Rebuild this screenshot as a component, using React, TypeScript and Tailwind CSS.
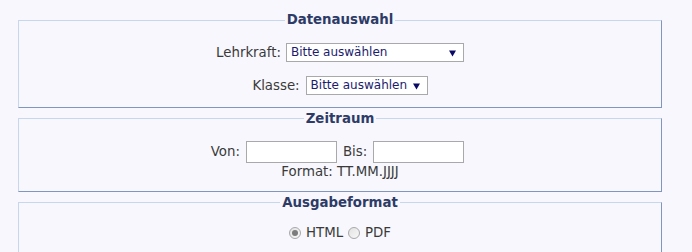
import React from 'react';

const font = "font-['DejaVu_Sans',Verdana,sans-serif]";

const Box: React.FC<{ title: string; className?: string; children: React.ReactNode }> = ({
    title,
    className = '',
    children,
}) => (
    <fieldset
        className={`w-[644px] border border-t-[#c7d7ec] border-l-[#c7d7ec] border-r-[#8196bd] border-b-[#8196bd] ${className}`}
    >
        <legend className="mx-auto px-[2px] text-[13.33px] leading-[16px] font-bold text-[#2d3b66]">
            {title}
        </legend>
        {children}
    </fieldset>
);

const FakeSelect: React.FC<{ width: string }> = ({ width }) => (
    <div
        className={`${width} h-[19px] flex items-center justify-between pl-[4px] pr-[7px] bg-white border border-[#a9a9a9] text-[12px] leading-[17px] text-[#1c1c6e]`}
    >
        <span>Bitte auswählen</span>
        <svg width="7" height="7" viewBox="0 0 7 7" className="mt-[1px]">
            <path d="M0 0.5 H7 L3.5 6.5 Z" fill="#0a0a66" />
        </svg>
    </div>
);

const Radio: React.FC<{ checked?: boolean }> = ({ checked }) => (
    <span className="w-[12px] h-[12px] rounded-full border border-[#a8a8a8] bg-gradient-to-br from-[#e2e2e2] to-[#f8f8f8] flex items-center justify-center">
        {checked && <span className="w-[6px] h-[6px] rounded-full bg-[#7c7c7c]" />}
    </span>
);

export default function App() {
    return (
        <div className={`w-[692px] h-[252px] overflow-hidden bg-[#f7f7fd] pt-[12px] pl-[18px] text-[13.33px] text-[#3a3a3a] ${font}`}>
            <Box title="Datenauswahl">
                <div className="flex flex-col items-center gap-[13px] pt-[15px] pb-[11px]">
                    <div className="flex items-center gap-[5px]">
                        <span>Lehrkraft:</span>
                        <FakeSelect width="w-[178px]" />
                    </div>
                    <div className="flex items-center gap-[6px]">
                        <span>Klasse:</span>
                        <FakeSelect width="w-[122px]" />
                    </div>
                </div>
            </Box>

            <Box title="Zeitraum" className="mt-[3px]">
                <div className="flex flex-col items-center pt-[14px] pb-[11px]">
                    <div className="flex items-center gap-[6px] pr-[5px]">
                        <span>Von:</span>
                        <input className="w-[91px] h-[22px] bg-white border border-[#a9a9a9]" />
                        <span>Bis:</span>
                        <input className="w-[91px] h-[22px] bg-white border border-[#a9a9a9]" />
                    </div>
                    <div className="leading-[16px] mt-[1px]">Format: TT.MM.JJJJ</div>
                </div>
            </Box>

            <Box title="Ausgabeformat" className="mt-[3px]">
                <div className="flex items-center justify-center gap-[5px] pt-[12px] pb-[14px]">
                    <label className="flex items-center gap-[5px]">
                        <Radio checked />
                        <span>HTML</span>
                    </label>
                    <label className="flex items-center gap-[5px]">
                        <Radio />
                        <span>PDF</span>
                    </label>
                </div>
            </Box>
        </div>
    );
}
